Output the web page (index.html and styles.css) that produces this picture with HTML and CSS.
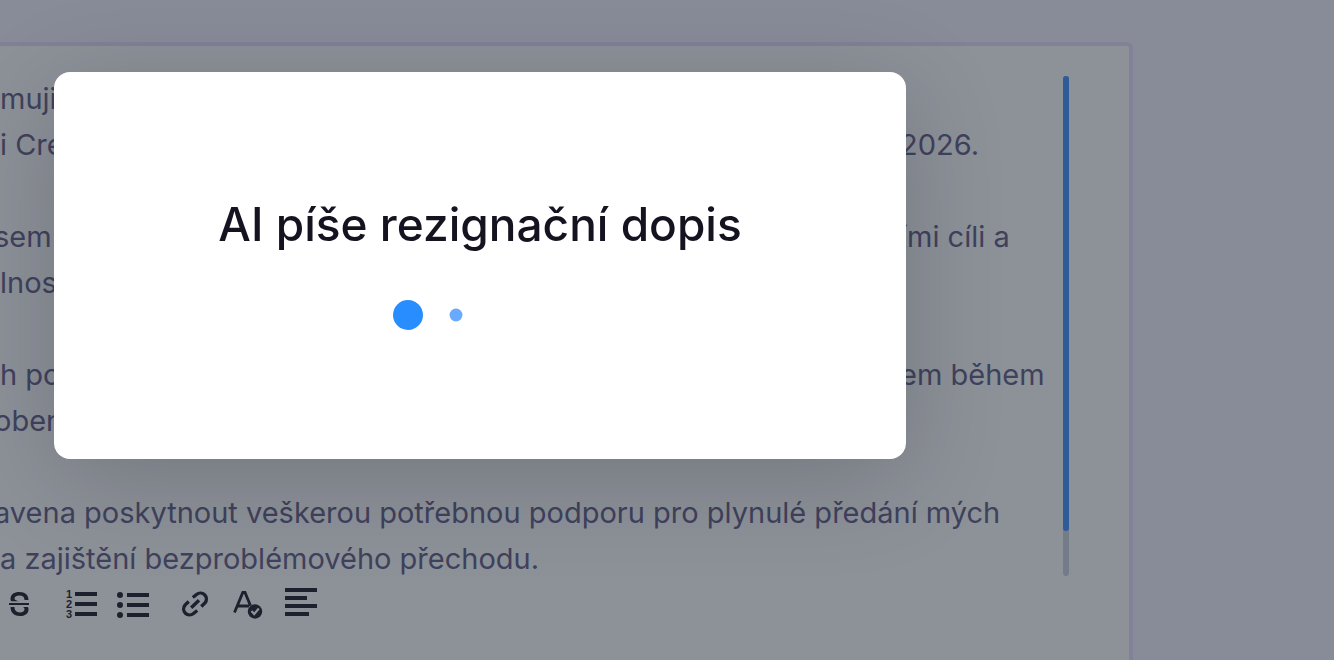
FILE: index.html
```
<!DOCTYPE html>
<html lang="cs">
  <head>
    <meta charset="UTF-8" />
    <meta name="viewport" content="width=device-width, initial-scale=1.0" />
    <title>Rezignační dopis</title>
    <link rel="stylesheet" href="styles.css">
  </head>
  <body>
    <main class="editor">
      <div class="editor-body">
        <div class="letter">
          <p class="line"><span>muji</span></p>
          <p class="line"><span>i Cre</span><span class="tail">2026.</span></p>
          <p class="line"></p>
          <p class="line cut"><span>sem</span><span class="tail">ími cíli a</span></p>
          <p class="line"><span>lnost</span></p>
          <p class="line"></p>
          <p class="line"><span>h po</span><span class="tail">em během</span></p>
          <p class="line cut"><span>oben</span></p>
          <p class="line"></p>
          <p class="line cut"><span>avena poskytnout veškerou potřebnou podporu pro plynulé předání mých</span></p>
          <p class="line"><span>a zajištění bezproblémového přechodu.</span></p>
        </div>
        <div class="scroll-track"><div class="scroll-thumb"></div></div>
      </div>

      <div class="toolbar">
        <div class="tool-group">
          <button type="button" class="tool" aria-label="Přeškrtnutí">
            <svg viewBox="0 0 32 32">
              <path d="M9.500 11C9.500 6.500 13 4 18.500 4S27.500 6.800 27.500 12H23.500C23.500 9 21.500 7.600 18.500 7.600S13.500 8.800 13.500 10.600C13.500 12 15 12.600 18 13.300H10.300C9.700 12.700 9.500 12 9.500 11z" />
              <path d="M9.500 19H13.500C13.500 22.500 15.500 24.400 18.800 24.400S23.500 23.200 23.500 21.300C23.500 20.200 23 19.500 22 19H26.900C27.400 19.700 27.500 20.500 27.500 21.400C27.500 25.500 24 28 18.800 28S9.500 25 9.500 19z" />
              <rect x="8" y="15" width="20" height="2" />
            </svg>
          </button>
        </div>
        <div class="tool-group">
          <button type="button" class="tool" aria-label="Číslovaný seznam">
            <svg viewBox="0 0 32 32">
              <text class="digit" x="7" y="10">1</text>
              <text class="digit" x="7" y="20">2</text>
              <text class="digit" x="7" y="30">3</text>
              <path d="M10 4h22v4H10zM10 14h22v4H10zM10 24h22v4H10z" />
            </svg>
          </button>
          <button type="button" class="tool" aria-label="Odrážky">
            <svg viewBox="0 0 32 32">
              <circle cx="3" cy="7" r="3" />
              <circle cx="3" cy="17" r="3" />
              <circle cx="3" cy="27" r="3" />
              <path d="M10 5h22v4H10zM10 15h22v4H10zM10 25h22v4H10z" />
            </svg>
          </button>
        </div>
        <div class="tool-group">
          <button type="button" class="tool" aria-label="Odkaz">
            <svg viewBox="0 0 32 32">
              <path class="stroke" d="M11.800 9.500 15.500 6.500A6 6 0 0 1 24 14.900L20.300 18.500" />
              <path class="stroke" d="M16.200 22.500 12.500 25.500A6 6 0 0 1 4 17.100L7.700 13.500" />
              <path class="stroke" d="M10.200 19.800 18 12.200" />
            </svg>
          </button>
          <button type="button" class="tool" aria-label="Kontrola pravopisu">
            <svg viewBox="0 0 32 32">
              <path class="stroke thin" d="M1.500 24.500 9.800 4.500h2.200L17.500 17.800M5 18h11" />
              <circle cx="22" cy="23.500" r="7.200" />
              <path class="check" d="M18.500 23 21.200 26 25.800 20.500" />
            </svg>
          </button>
          <button type="button" class="tool" aria-label="Zarovnat vlevo">
            <svg viewBox="0 0 32 32">
              <path d="M0 0h32v4H0zM0 8h22v4H0zM0 16h32v4H0zM0 24h24v4H0z" />
            </svg>
          </button>
        </div>
      </div>
    </main>

    <div class="overlay">
      <div class="modal" role="dialog" aria-modal="true" aria-labelledby="modal-title">
        <h1 id="modal-title">AI píše rezignační dopis</h1>
        <div class="loader">
          <span class="dot"></span>
          <span class="dot small"></span>
          <span class="dot off"></span>
          <span class="dot off"></span>
        </div>
      </div>
    </div>
  </body>
</html>
```
FILE: styles.css
```
* {
  box-sizing: border-box;
}

body {
  margin: 0;
  height: 100vh;
  padding-top: 42px;
  overflow: hidden;
  background: #f5f5ff;
  font-family: Inter, "Open Sans", sans-serif;
}

.editor {
  height: 100%;
  margin-right: 201px;
  padding: 30px 60px 0 0;
  background: white;
  border: 4px solid #e6e0ff;
  border-left: 0;
  border-bottom: 0;
  border-top-right-radius: 6px;
}

.editor-body {
  display: flex;
  gap: 15px;
  height: 500px;
}

.letter {
  flex: 1;
  min-width: 0;
}

.line {
  display: flex;
  justify-content: space-between;
  height: 46px;
  margin: 0;
  color: #655f89;
  font-size: 29px;
  line-height: 45px;
  white-space: nowrap;
}

/* lines whose first letter runs off the left edge */
.cut {
  margin-left: -6px;
}

.tail {
  flex: 0 0 148px;
}

.scroll-track {
  width: 6px;
  background: #cdd3e1;
  border-radius: 3px;
}

.scroll-thumb {
  height: 91%;
  background: #3f95ff;
  border-radius: 3px;
}

.toolbar {
  display: flex;
  gap: 32px;
  padding: 12px 0 0 1px;
}

.tool-group {
  display: flex;
  gap: 20px;
}

.tool {
  width: 32px;
  height: 32px;
  padding: 0;
  border: 0;
  background: none;
  cursor: pointer;
}

.tool svg {
  display: block;
  width: 32px;
  height: 32px;
  fill: #1c1e28;
}

.tool .stroke {
  fill: none;
  stroke: #1c1e28;
  stroke-width: 3.4;
}

.tool .thin {
  stroke-width: 2.8;
}

.tool .check {
  fill: none;
  stroke: white;
  stroke-width: 2.2;
}

.digit {
  font-size: 11px;
  font-weight: 900;
  text-anchor: end;
}

.overlay {
  position: fixed;
  inset: 0;
  padding: 72px 428px 0 54px;
  background: rgba(27, 35, 50, 0.5);
}

.modal {
  padding: 122px 40px 129px;
  background: white;
  border-radius: 16px;
  box-shadow: 0 20px 100px rgba(14, 20, 28, 0.2);
  text-align: center;
}

.modal h1 {
  margin: 0 0 46px;
  color: #14131f;
  font-size: 46px;
  font-weight: 500;
  line-height: 60px;
}

.loader {
  display: flex;
  justify-content: center;
  gap: 18px;
}

.dot {
  width: 30px;
  height: 30px;
  background: #288dff;
  border-radius: 50%;
}

.dot.small {
  background: #68aaff;
  transform: scale(0.43);
}

.dot.off {
  transform: scale(0);
}
```
